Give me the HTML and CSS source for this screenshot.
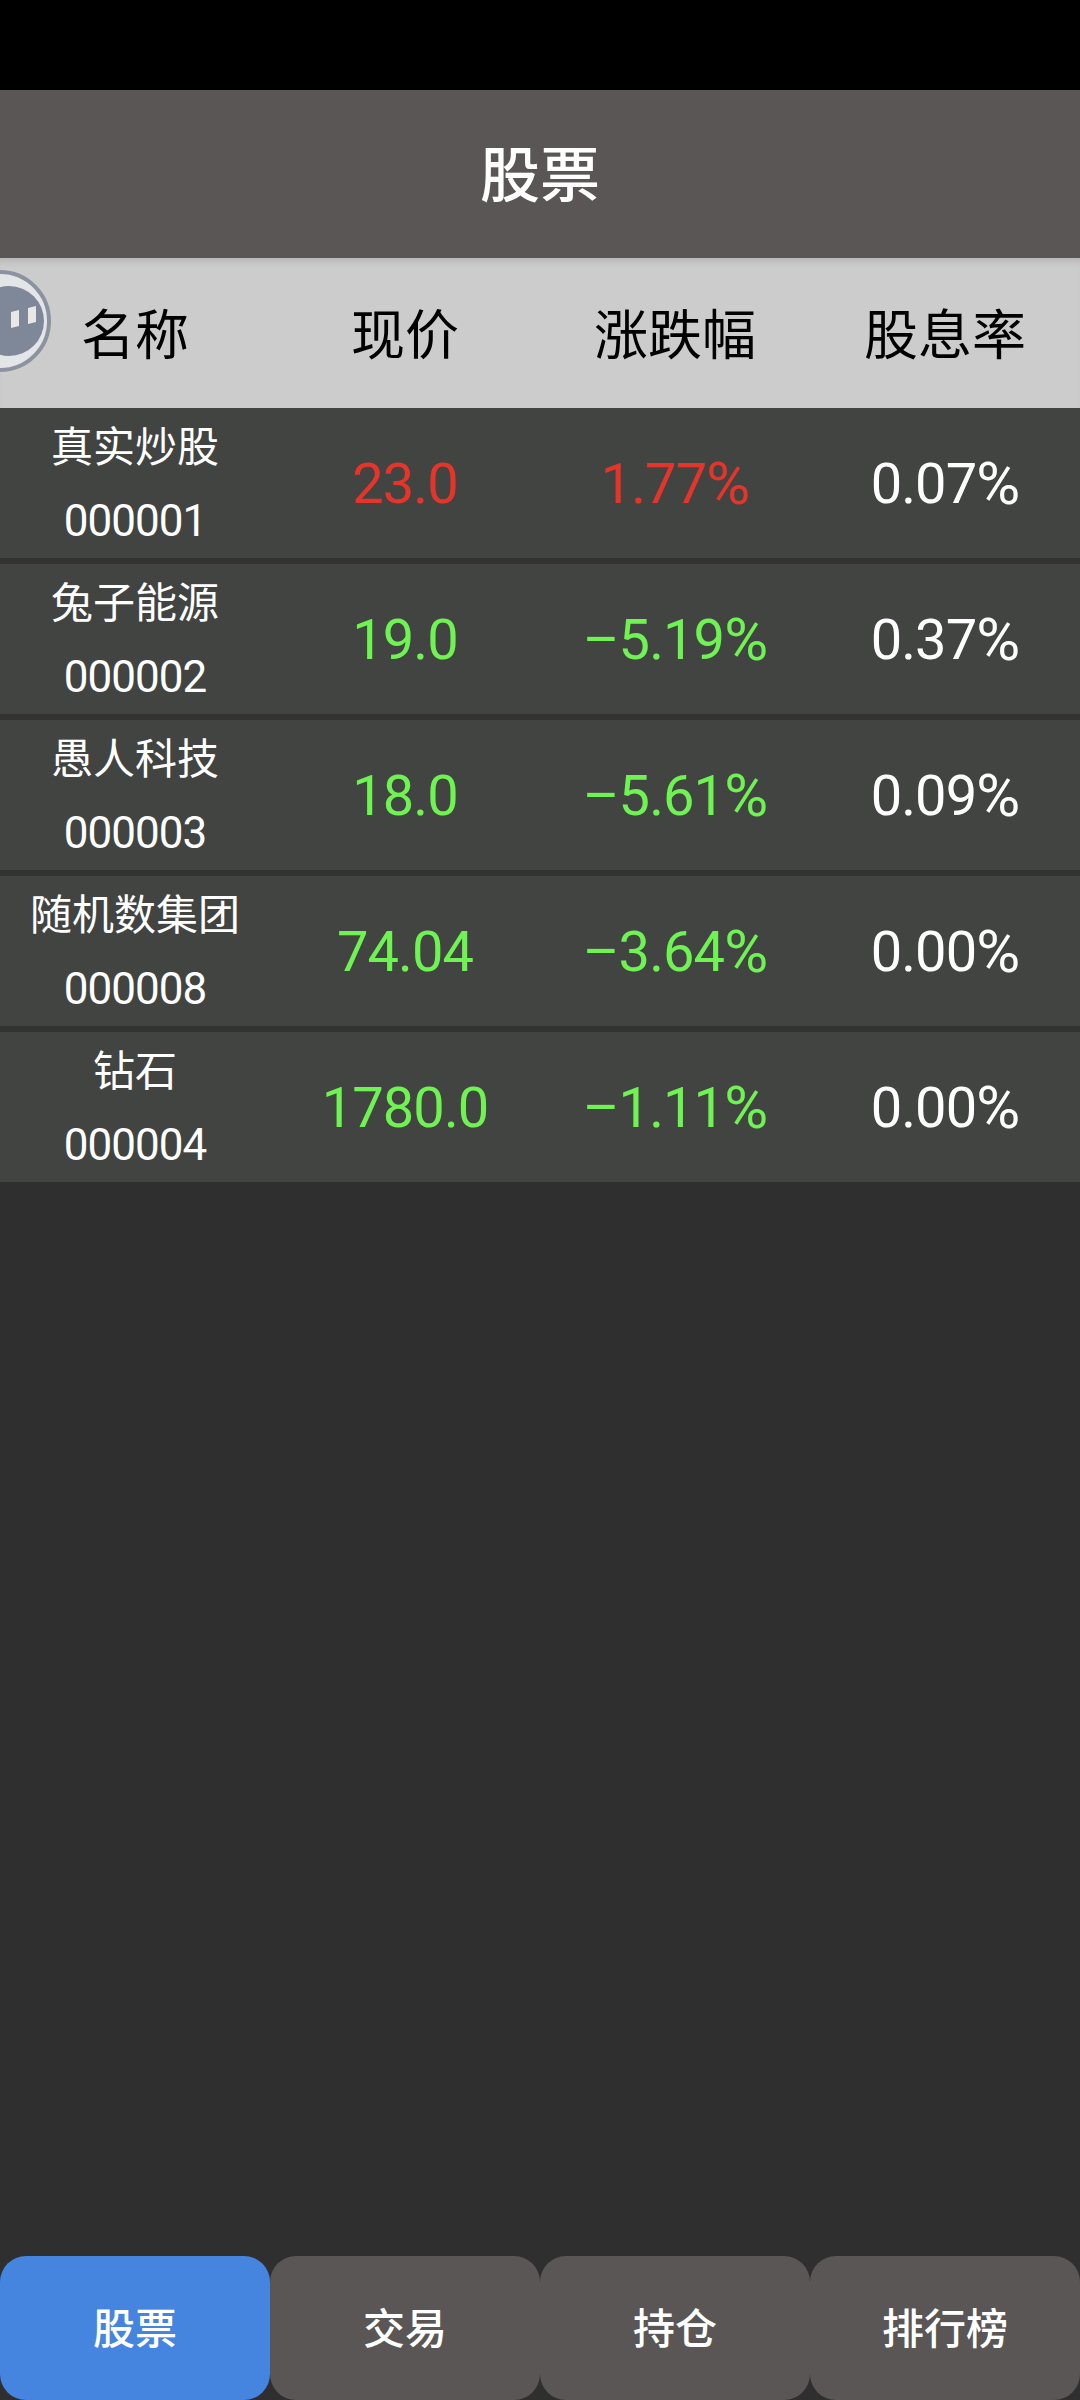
FILE: index.html
```html
<!DOCTYPE html>
<html lang="zh-CN">
<head>
<meta charset="utf-8">
<title>股票</title>
<link rel="stylesheet" href="styles.css">
</head>
<body>
<div class="app">
  <div class="statusbar"></div>
  <header class="titlebar"><h1 class="title">股票</h1></header>
  <div class="thead">
    <div class="th">名称</div>
    <div class="th">现价</div>
    <div class="th">涨跌幅</div>
    <div class="th">股息率</div>
    <svg class="bubble" viewBox="0 0 56 110" width="56" height="110" aria-hidden="true">
      <circle cx="0" cy="55" r="49" fill="#e4e5e6" stroke="#8b93a1" stroke-width="4"/>
      <circle cx="9" cy="55" r="35" fill="#7f8899"/>
      <path d="M11 46 L19 44 V60 L11 62 Z M28 42 L36 40 V56 L28 58 Z" fill="#e8e9e6"/>
    </svg>
  </div>
  <main class="list">
    <div class="row">
      <div class="name"><span>真实炒股</span><span class="code">000001</span></div>
      <div class="num up">23.0</div><div class="num up">1.77<span class="pct">%</span></div><div class="num">0.07<span class="pct">%</span></div>
    </div>
    <div class="row">
      <div class="name"><span>兔子能源</span><span class="code">000002</span></div>
      <div class="num down">19.0</div><div class="num down">–5.19<span class="pct">%</span></div><div class="num">0.37<span class="pct">%</span></div>
    </div>
    <div class="row">
      <div class="name"><span>愚人科技</span><span class="code">000003</span></div>
      <div class="num down">18.0</div><div class="num down">–5.61<span class="pct">%</span></div><div class="num">0.09<span class="pct">%</span></div>
    </div>
    <div class="row">
      <div class="name"><span>随机数集团</span><span class="code">000008</span></div>
      <div class="num down">74.04</div><div class="num down">–3.64<span class="pct">%</span></div><div class="num">0.00<span class="pct">%</span></div>
    </div>
    <div class="row">
      <div class="name"><span>钻石</span><span class="code">000004</span></div>
      <div class="num down">1780.0</div><div class="num down">–1.11<span class="pct">%</span></div><div class="num">0.00<span class="pct">%</span></div>
    </div>
  </main>
  <nav class="tabs">
    <div class="tab active">股票</div>
    <div class="tab">交易</div>
    <div class="tab">持仓</div>
    <div class="tab">排行榜</div>
  </nav>
</div>
</body>
</html>
```
FILE: styles.css
```css
* { box-sizing: border-box; margin: 0; padding: 0; }
html, body { width: 1080px; height: 2400px; overflow: hidden; background: #302f2f; }
body { font-family: "Noto Sans CJK SC", "Noto Sans", sans-serif; color: #fff; }
.app { width: 1080px; height: 2400px; display: flex; flex-direction: column; background: #302f2f; }
.statusbar { height: 90px; background: #000; flex: none; }
.titlebar { height: 168px; flex: none; background: #5a5655; display: flex; align-items: center; justify-content: center; }
.title { font-size: 60px; font-weight: 500; line-height: 1; color: #fff; padding-bottom: 6px; }
.thead { position: relative; height: 150px; flex: none; display: grid; grid-template-columns: repeat(4, 270px); background: #cccccc; box-shadow: inset 0 8px 8px -6px rgba(0,0,0,.14); }
.th { display: flex; align-items: center; justify-content: center; font-size: 54px; color: #000; padding-bottom: 4px; }
.bubble { position: absolute; left: 0; top: 8px; }
.list { flex: 1; display: flex; flex-direction: column; gap: 6px; }
.row { height: 150px; display: grid; grid-template-columns: repeat(4, 270px); background: #424442; box-shadow: 0 -6px 0 #333432; }
.row:first-child { box-shadow: none; }
.name { display: flex; flex-direction: column; align-items: center; font-size: 42px; line-height: 75px; margin-top: -2px; }
.code { font-family: "Roboto", sans-serif; font-size: 44px; font-weight: 400; letter-spacing: -1px; padding-top: 3px; }
.num { display: flex; align-items: center; justify-content: center; font-family: "Roboto", sans-serif; font-weight: 400; font-size: 56px; letter-spacing: -.9px; color: #fff; }
.pct { font-size: 60px; line-height: 1; }
.up { color: #e5352b; }
.down { color: #6ff353; }
.tabs { height: 144px; flex: none; display: grid; grid-template-columns: repeat(4, 270px); }
.tab { background: #5a5655; border-radius: 26px; display: flex; align-items: center; justify-content: center; font-size: 42px; font-weight: 500; color: #fff; padding-bottom: 6px; }
.tab.active { background: #4585df; }
```
